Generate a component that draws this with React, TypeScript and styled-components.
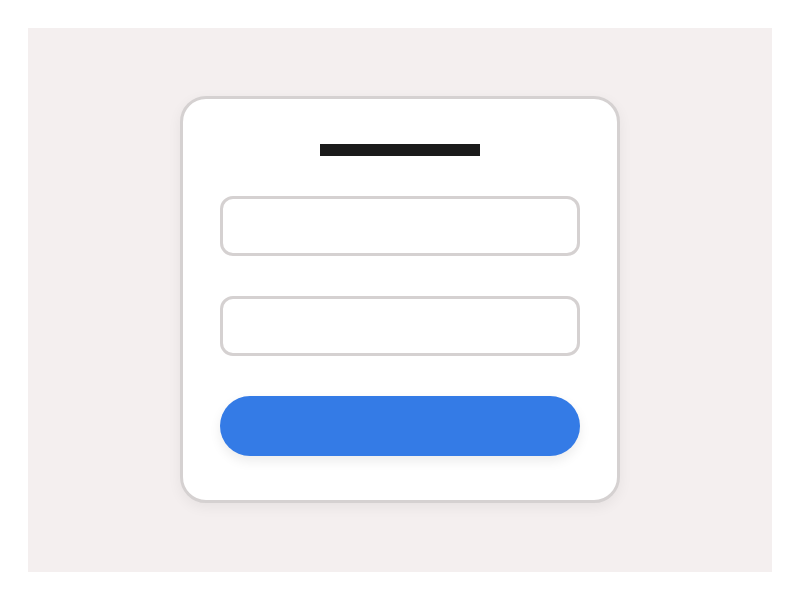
import React from "react";
import styled, { createGlobalStyle } from "styled-components";

const GlobalStyle = createGlobalStyle`
  html, body {
    margin: 0;
    padding: 0;
    background: #ffffff;
    font-family: "Liberation Sans", Arial, sans-serif;
  }
`;

const Page = styled.div`
  width: 800px;
  height: 600px;
  padding: 28px;
  box-sizing: border-box;
  background: #ffffff;
`;

const Stage = styled.div`
  width: 100%;
  height: 100%;
  background: #f4efef;
  display: flex;
  justify-content: center;
  align-items: flex-start;
  padding-top: 68px;
  box-sizing: border-box;
`;

const Card = styled.form`
  width: 440px;
  box-sizing: border-box;
  padding: 45px 37px 44px;
  background: #ffffff;
  border: 3px solid #d5d1d1;
  border-radius: 26px;
  box-shadow: 0 4px 14px rgba(0, 0, 0, 0.06);
  display: flex;
  flex-direction: column;
  align-items: center;
  gap: 40px;
`;

const TitleBar = styled.div`
  width: 160px;
  height: 12px;
  background: #1a1a1a;
`;

const Field = styled.div`
  width: 100%;
  height: 60px;
  box-sizing: border-box;
  border: 3px solid #d5d1d1;
  border-radius: 13px;
  background: #ffffff;
`;

const Submit = styled.div`
  width: 100%;
  height: 60px;
  border-radius: 30px;
  background: #347be6;
  box-shadow: 0 5px 12px rgba(0, 0, 0, 0.08);
`;

export default function App() {
  return (
    <>
      <GlobalStyle />
      <Page>
        <Stage>
          <Card>
            <TitleBar />
            <Field />
            <Field />
            <Submit />
          </Card>
        </Stage>
      </Page>
    </>
  );
}
